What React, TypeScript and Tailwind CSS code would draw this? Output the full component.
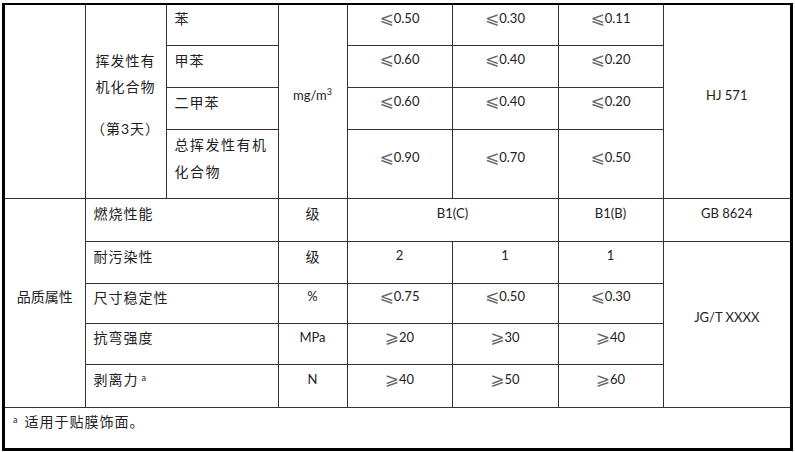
import React from 'react';

const cell = 'border border-[#333] align-middle pb-[12px]';
const center = `${cell} text-center`;
const left = `${cell} text-left pl-[8px]`;

const sym = "inline-block align-[-1px] text-[17px] leading-[13px] font-['DejaVu_Sans',sans-serif] text-[#666]";

const Le: React.FC<{ v: string }> = ({ v }) => (
  <span>
    <span className={sym}>⩽</span>
    {v}
  </span>
);

const Ge: React.FC<{ v: string }> = ({ v }) => (
  <span>
    <span className={sym}>⩾</span>
    {v}
  </span>
);

const App: React.FC = () => {
  return (
    <div className="w-[795px] h-[452px] bg-white pl-[2px] pt-[3px] text-[#222] font-['Lato','Noto_Sans_CJK_SC','DejaVu_Sans',sans-serif] text-[13px]">
      <div className="w-[791px] border-t-2 border-l-[3px] border-r-[3px] border-b-[3px] border-black">
        <table className="table-fixed border-collapse border-hidden w-[785px]">
          <colgroup>
            <col className="w-[80px]" />
            <col className="w-[81px]" />
            <col className="w-[112px]" />
            <col className="w-[69px]" />
            <col className="w-[105px]" />
            <col className="w-[106px]" />
            <col className="w-[105px]" />
            <col className="w-[127px]" />
          </colgroup>
          <tbody>
            {/* 挥发性有机化合物 */}
            <tr className="h-[40px]">
              <td rowSpan={4} className={cell}></td>
              <td rowSpan={4} className={`${center} pb-[8px] text-[14px] tracking-[1px] leading-[26px]`}>
                <div>挥发性有</div>
                <div>机化合物</div>
                <div className="mt-[16px]">（第3天）</div>
              </td>
              <td className={`${left} text-[14px] tracking-[1px]`}>苯</td>
              <td rowSpan={4} className={`${center} pb-[8px]`}>
                mg/m<sup className="text-[9px]">3</sup>
              </td>
              <td className={center}><Le v="0.50" /></td>
              <td className={center}><Le v="0.30" /></td>
              <td className={center}><Le v="0.11" /></td>
              <td rowSpan={4} className={`${center} pb-[8px]`}>HJ 571</td>
            </tr>
            <tr className="h-[42px]">
              <td className={`${left} text-[14px] tracking-[1px]`}>甲苯</td>
              <td className={center}><Le v="0.60" /></td>
              <td className={center}><Le v="0.40" /></td>
              <td className={center}><Le v="0.20" /></td>
            </tr>
            <tr className="h-[42px]">
              <td className={`${left} text-[14px] tracking-[1px]`}>二甲苯</td>
              <td className={center}><Le v="0.60" /></td>
              <td className={center}><Le v="0.40" /></td>
              <td className={center}><Le v="0.20" /></td>
            </tr>
            <tr className="h-[69px]">
              <td className={`${left} text-[14px] tracking-[1.5px] leading-[27px]`}>
                总挥发性有机
                <br />
                化合物
              </td>
              <td className={center}><Le v="0.90" /></td>
              <td className={center}><Le v="0.70" /></td>
              <td className={center}><Le v="0.50" /></td>
            </tr>

            {/* 品质属性 */}
            <tr className="h-[43px]">
              <td rowSpan={5} className={`${center} pb-[8px] text-[14px]`}>品质属性</td>
              <td colSpan={2} className={`${left} text-[14px] tracking-[1px]`}>燃烧性能</td>
              <td className={`${center} text-[14px]`}>级</td>
              <td colSpan={2} className={center}>B1(C)</td>
              <td className={center}>B1(B)</td>
              <td className={center}>GB 8624</td>
            </tr>
            <tr className="h-[42px]">
              <td colSpan={2} className={`${left} text-[14px] tracking-[1px]`}>耐污染性</td>
              <td className={`${center} text-[14px]`}>级</td>
              <td className={center}>2</td>
              <td className={center}>1</td>
              <td className={center}>1</td>
              <td rowSpan={4} className={`${center} pb-[8px]`}>JG/T XXXX</td>
            </tr>
            <tr className="h-[40px]">
              <td colSpan={2} className={`${left} text-[14px] tracking-[1px]`}>尺寸稳定性</td>
              <td className={center}>%</td>
              <td className={center}><Le v="0.75" /></td>
              <td className={center}><Le v="0.50" /></td>
              <td className={center}><Le v="0.30" /></td>
            </tr>
            <tr className="h-[41px]">
              <td colSpan={2} className={`${left} text-[14px] tracking-[1px]`}>抗弯强度</td>
              <td className={center}>MPa</td>
              <td className={center}><Ge v="20" /></td>
              <td className={center}><Ge v="30" /></td>
              <td className={center}><Ge v="40" /></td>
            </tr>
            <tr className="h-[43px]">
              <td colSpan={2} className={`${left} text-[14px] tracking-[1px]`}>
                剥离力<sup className="text-[9px] ml-[3px]">a</sup>
              </td>
              <td className={center}>N</td>
              <td className={center}><Ge v="40" /></td>
              <td className={center}><Ge v="50" /></td>
              <td className={center}><Ge v="60" /></td>
            </tr>

            {/* 注 */}
            <tr className="h-[41px]">
              <td colSpan={8} className={`${cell} text-left pl-[8px] text-[14px] tracking-[1px]`}>
                <sup className="text-[9px] mr-[6px]">a</sup>适用于贴膜饰面。
              </td>
            </tr>
          </tbody>
        </table>
      </div>
    </div>
  );
};

export default App;
